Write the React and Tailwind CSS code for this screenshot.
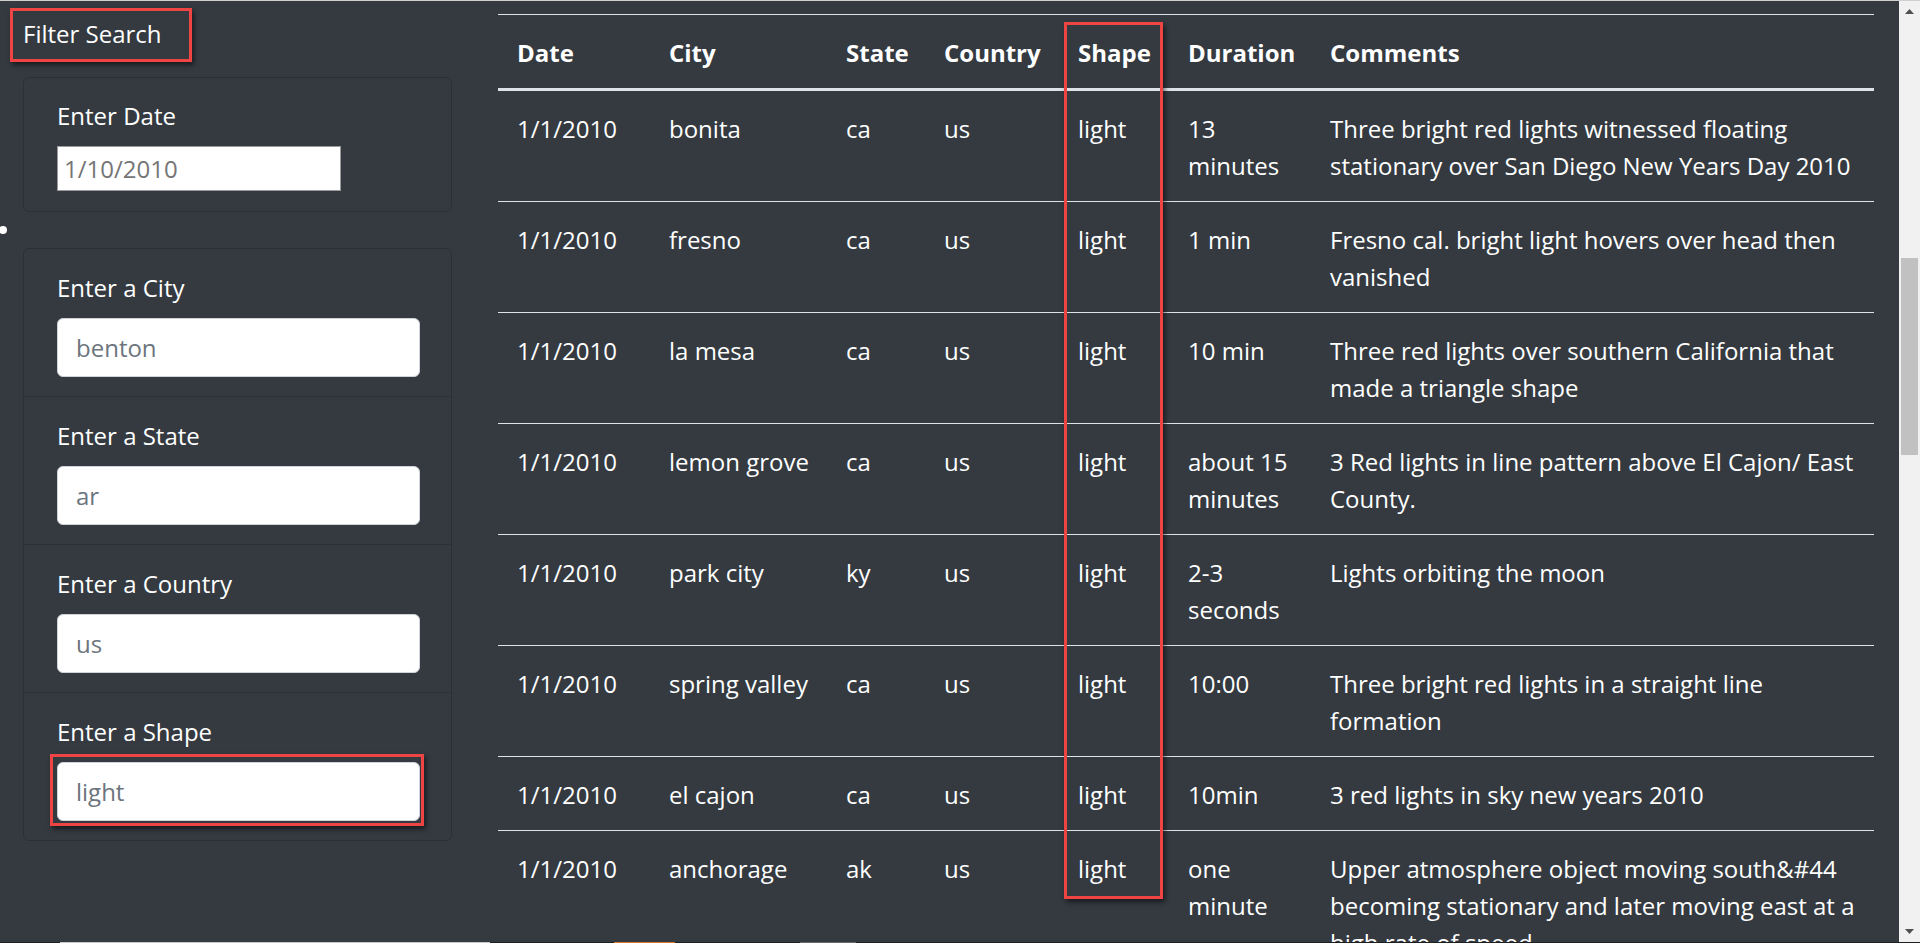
const rows = [
  { date: "1/1/2010", city: "bonita", state: "ca", country: "us", shape: "light", duration: ["13", "minutes"], comments: ["Three bright red lights witnessed floating", "stationary over San Diego New Years Day 2010"] },
  { date: "1/1/2010", city: "fresno", state: "ca", country: "us", shape: "light", duration: ["1 min"], comments: ["Fresno cal. bright light hovers over head then", "vanished"] },
  { date: "1/1/2010", city: "la mesa", state: "ca", country: "us", shape: "light", duration: ["10 min"], comments: ["Three red lights over southern California that", "made a triangle shape"] },
  { date: "1/1/2010", city: "lemon grove", state: "ca", country: "us", shape: "light", duration: ["about 15", "minutes"], comments: ["3 Red lights in line pattern above El Cajon/ East", "County."] },
  { date: "1/1/2010", city: "park city", state: "ky", country: "us", shape: "light", duration: ["2-3", "seconds"], comments: ["Lights orbiting the moon"] },
  { date: "1/1/2010", city: "spring valley", state: "ca", country: "us", shape: "light", duration: ["10:00"], comments: ["Three bright red lights in a straight line", "formation"] },
  { date: "1/1/2010", city: "el cajon", state: "ca", country: "us", shape: "light", duration: ["10min"], comments: ["3 red lights in sky new years 2010"] },
  { date: "1/1/2010", city: "anchorage", state: "ak", country: "us", shape: "light", duration: ["one", "minute"], comments: ["Upper atmosphere object moving south&#44", "becoming stationary and later moving east at a", "high rate of speed."] },
];

const filters = [
  { label: "Enter a City", value: "benton" },
  { label: "Enter a State", value: "ar" },
  { label: "Enter a Country", value: "us" },
  { label: "Enter a Shape", value: "light", marked: true },
];

function Lines({ items }) {
  return items.map((t, i) => (
    <span key={i} className="block whitespace-nowrap">
      {t}
    </span>
  ));
}

const td = "align-top pl-[19px] pr-[17px] pt-[19px] pb-[17px] border-t border-[#dee2e6] leading-[37px] font-normal text-left";
const th = "align-top pl-[19px] pr-[17px] pt-[19px] pb-[17px] border-t border-b-2 border-[#dee2e6] leading-[37px] font-bold text-left whitespace-nowrap";

export default function App() {
  return (
    <div className="w-[1920px] h-[943px] flex flex-col overflow-hidden bg-[#343a40] text-white font-['Open_Sans',sans-serif] text-[24px]">
      <div className="h-px shrink-0 bg-[#cfcfcf]" />
      <div className="flex flex-1 min-h-0">
        <div className="flex flex-1 min-w-0">
          {/* Left filter panel */}
          <aside className="w-[475px] shrink-0 flex flex-col">
            <div className="ml-[10px] mt-[7px] w-[182px] h-[54px] border-[3px] border-[#ef4444] flex items-center pl-[10px] pb-[2px] leading-none shadow-[2px_3px_5px_rgba(0,0,0,0.55)]">
              Filter Search
            </div>
            <div className="mx-[23px] mt-[15px] rounded-[6px] border border-[#2b3035] pl-[33px] pr-[31px] pt-[20px] pb-[20px]">
              <label className="block leading-[36px] mb-[12px]">Enter Date</label>
              <input
                readOnly
                value="1/10/2010"
                className="block w-[284px] h-[45px] bg-white border border-[#9a9a9a] pl-[6px] text-[24px] text-[#757575] outline-none"
              />
            </div>
            <div className="h-[36px] flex items-center">
              <span className="block w-[8px] h-[8px] rounded-full bg-white -ml-[1px]" />
            </div>
            <div className="mx-[23px] rounded-[6px] border border-[#2b3035]">
              {filters.map((f, i) => (
                <div
                  key={f.label}
                  className={`pl-[33px] pr-[31px] pt-[21px] pb-[19px] ${i > 0 ? "border-t border-[#2b3035]" : ""}`}
                >
                  <label className="block leading-[36px] mb-[12px]">{f.label}</label>
                  <div className="relative">
                    <input
                      readOnly
                      value={f.value}
                      className="block w-full h-[59px] bg-white rounded-[6px] border border-[#ced4da] px-[18px] text-[24px] text-[#6c757d] outline-none"
                    />
                    {f.marked && (
                      <div className="absolute -left-[7px] -top-[8px] -right-[4px] -bottom-[5px] border-[3px] border-[#ef4444] shadow-[2px_3px_5px_rgba(0,0,0,0.55)] pointer-events-none" />
                    )}
                  </div>
                </div>
              ))}
            </div>
          </aside>

          {/* Table */}
          <section className="flex-1 min-w-0 pl-[23px] pr-[25px] pt-[13px] overflow-hidden">
            <div className="relative">
              <table className="w-full table-fixed border-separate border-spacing-0">
                <colgroup>
                  <col className="w-[152px]" />
                  <col className="w-[177px]" />
                  <col className="w-[98px]" />
                  <col className="w-[134px]" />
                  <col className="w-[110px]" />
                  <col className="w-[142px]" />
                  <col />
                </colgroup>
                <thead>
                  <tr>
                    <th className={th}>Date</th>
                    <th className={th}>City</th>
                    <th className={th}>State</th>
                    <th className={th}>Country</th>
                    <th className={th}>Shape</th>
                    <th className={th}>Duration</th>
                    <th className={th}>Comments</th>
                  </tr>
                </thead>
                <tbody>
                  {rows.map((r, i) => (
                    <tr key={i}>
                      <td className={td}><span className="whitespace-nowrap">{r.date}</span></td>
                      <td className={td}><span className="whitespace-nowrap">{r.city}</span></td>
                      <td className={td}>{r.state}</td>
                      <td className={td}>{r.country}</td>
                      <td className={td}>{r.shape}</td>
                      <td className={td}><Lines items={r.duration} /></td>
                      <td className={td}><Lines items={r.comments} /></td>
                    </tr>
                  ))}
                </tbody>
              </table>
              <div className="absolute left-[566px] top-[8px] w-[99px] h-[877px] border-[3px] border-[#ef4444] shadow-[2px_3px_5px_rgba(0,0,0,0.55)] pointer-events-none" />
            </div>
          </section>
        </div>

        {/* Scrollbar */}
        <div className="w-[21px] shrink-0 bg-[#f1f1f1] flex flex-col">
          <div className="h-[21px] flex items-center justify-center">
            <svg width="9" height="5" viewBox="0 0 9 5"><path d="M0 5 L4.5 0 L9 5 Z" fill="#505050" /></svg>
          </div>
          <div className="flex-1 min-h-0 px-[2px]">
            <div className="mt-[236px] h-[197px] bg-[#c1c1c1]" />
          </div>
          <div className="h-[21px] flex items-center justify-center">
            <svg width="9" height="5" viewBox="0 0 9 5"><path d="M0 0 L9 0 L4.5 5 Z" fill="#505050" /></svg>
          </div>
        </div>
      </div>
      {/* taskbar peek */}
      <div className="h-px shrink-0 flex bg-[#1f1f1f]">
        <div className="w-[60px]" />
        <div className="w-[430px] bg-[#c8c8c8]" />
        <div className="w-[124px]" />
        <div className="w-[61px] bg-[#d9772a]" />
        <div className="w-[125px]" />
        <div className="w-[56px] bg-[#6b6b6b]" />
      </div>
    </div>
  );
}
